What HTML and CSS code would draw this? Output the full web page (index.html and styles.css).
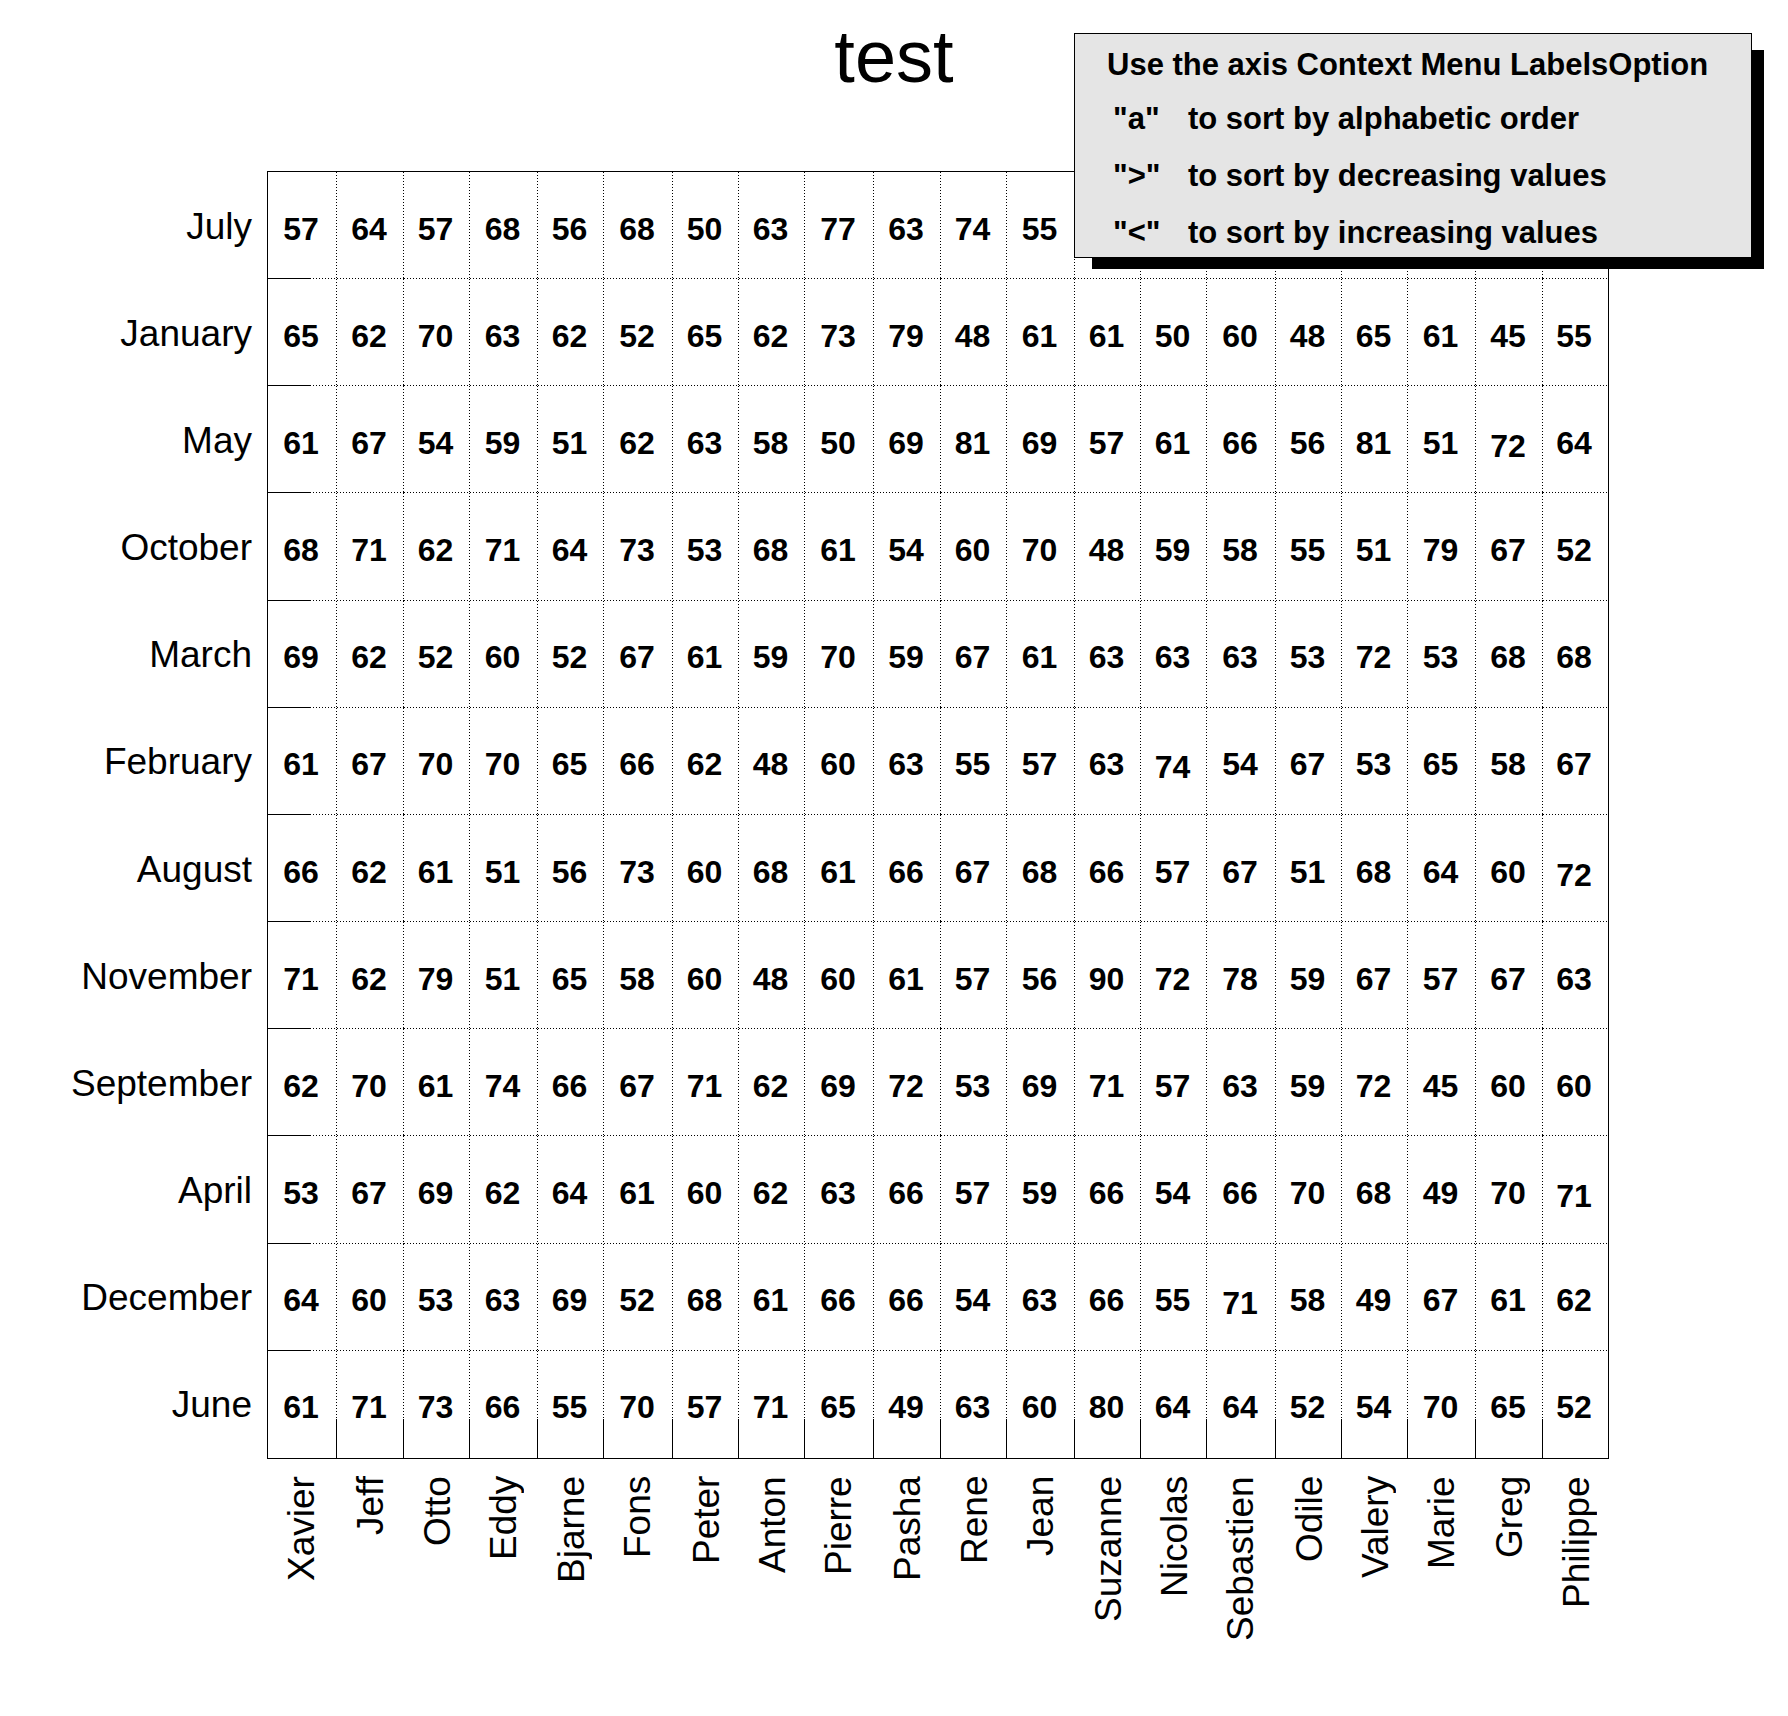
FILE: index.html
```html
<!DOCTYPE html>
<html lang="en">
<head>
<meta charset="utf-8">
<title>test</title>
<link rel="stylesheet" href="styles.css">
</head>
<body>
<h1 class="title">test</h1>

<div class="plot">
  <div class="ylabels">
    <div class="yl">July</div>
    <div class="yl">January</div>
    <div class="yl">May</div>
    <div class="yl">October</div>
    <div class="yl">March</div>
    <div class="yl">February</div>
    <div class="yl">August</div>
    <div class="yl">November</div>
    <div class="yl">September</div>
    <div class="yl">April</div>
    <div class="yl">December</div>
    <div class="yl">June</div>
  </div>

  <div class="frame">
    <div>57</div><div>64</div><div>57</div><div>68</div><div>56</div><div>68</div><div>50</div><div>63</div><div>77</div><div>63</div><div>74</div><div>55</div><div></div><div></div><div></div><div></div><div></div><div></div><div></div><div></div>
    <div>65</div><div>62</div><div>70</div><div>63</div><div>62</div><div>52</div><div>65</div><div>62</div><div>73</div><div>79</div><div>48</div><div>61</div><div>61</div><div>50</div><div>60</div><div>48</div><div>65</div><div>61</div><div>45</div><div>55</div>
    <div>61</div><div>67</div><div>54</div><div>59</div><div>51</div><div>62</div><div>63</div><div>58</div><div>50</div><div>69</div><div>81</div><div>69</div><div>57</div><div>61</div><div>66</div><div>56</div><div>81</div><div>51</div><div class="lo">72</div><div>64</div>
    <div>68</div><div>71</div><div>62</div><div>71</div><div>64</div><div>73</div><div>53</div><div>68</div><div>61</div><div>54</div><div>60</div><div>70</div><div>48</div><div>59</div><div>58</div><div>55</div><div>51</div><div>79</div><div>67</div><div>52</div>
    <div>69</div><div>62</div><div>52</div><div>60</div><div>52</div><div>67</div><div>61</div><div>59</div><div>70</div><div>59</div><div>67</div><div>61</div><div>63</div><div>63</div><div>63</div><div>53</div><div>72</div><div>53</div><div>68</div><div>68</div>
    <div>61</div><div>67</div><div>70</div><div>70</div><div>65</div><div>66</div><div>62</div><div>48</div><div>60</div><div>63</div><div>55</div><div>57</div><div>63</div><div class="lo">74</div><div>54</div><div>67</div><div>53</div><div>65</div><div>58</div><div>67</div>
    <div>66</div><div>62</div><div>61</div><div>51</div><div>56</div><div>73</div><div>60</div><div>68</div><div>61</div><div>66</div><div>67</div><div>68</div><div>66</div><div>57</div><div>67</div><div>51</div><div>68</div><div>64</div><div>60</div><div class="lo">72</div>
    <div>71</div><div>62</div><div>79</div><div>51</div><div>65</div><div>58</div><div>60</div><div>48</div><div>60</div><div>61</div><div>57</div><div>56</div><div>90</div><div>72</div><div>78</div><div>59</div><div>67</div><div>57</div><div>67</div><div>63</div>
    <div>62</div><div>70</div><div>61</div><div>74</div><div>66</div><div>67</div><div>71</div><div>62</div><div>69</div><div>72</div><div>53</div><div>69</div><div>71</div><div>57</div><div>63</div><div>59</div><div>72</div><div>45</div><div>60</div><div>60</div>
    <div>53</div><div>67</div><div>69</div><div>62</div><div>64</div><div>61</div><div>60</div><div>62</div><div>63</div><div>66</div><div>57</div><div>59</div><div>66</div><div>54</div><div>66</div><div>70</div><div>68</div><div>49</div><div>70</div><div class="lo">71</div>
    <div>64</div><div>60</div><div>53</div><div>63</div><div>69</div><div>52</div><div>68</div><div>61</div><div>66</div><div>66</div><div>54</div><div>63</div><div>66</div><div>55</div><div class="lo">71</div><div>58</div><div>49</div><div>67</div><div>61</div><div>62</div>
    <div>61</div><div>71</div><div>73</div><div>66</div><div>55</div><div>70</div><div>57</div><div>71</div><div>65</div><div>49</div><div>63</div><div>60</div><div>80</div><div>64</div><div>64</div><div>52</div><div>54</div><div>70</div><div>65</div><div>52</div>
  </div>

  <div class="xlabels">
    <div class="xl">Xavier</div>
    <div class="xl">Jeff</div>
    <div class="xl">Otto</div>
    <div class="xl">Eddy</div>
    <div class="xl">Bjarne</div>
    <div class="xl">Fons</div>
    <div class="xl">Peter</div>
    <div class="xl">Anton</div>
    <div class="xl">Pierre</div>
    <div class="xl">Pasha</div>
    <div class="xl">Rene</div>
    <div class="xl">Jean</div>
    <div class="xl">Suzanne</div>
    <div class="xl">Nicolas</div>
    <div class="xl">Sebastien</div>
    <div class="xl">Odile</div>
    <div class="xl">Valery</div>
    <div class="xl">Marie</div>
    <div class="xl">Greg</div>
    <div class="xl">Philippe</div>
  </div>
</div>

<div class="legend">
  <div class="lg-head">Use the axis Context Menu LabelsOption</div>
  <div class="lg-row"><span class="lg-key">"a"</span><span>to sort by alphabetic order</span></div>
  <div class="lg-row"><span class="lg-key">"&gt;"</span><span>to sort by decreasing values</span></div>
  <div class="lg-row"><span class="lg-key">"&lt;"</span><span>to sort by increasing values</span></div>
</div>
</body>
</html>
```

FILE: styles.css
```css
* {
  box-sizing: border-box;
}

html,
body {
  margin: 0;
  padding: 0;
  background: #ffffff;
}

body {
  position: relative;
  width: 1788px;
  height: 1716px;
  overflow: hidden;
  font-family: "Liberation Sans", Arial, Helvetica, sans-serif;
  color: #000000;
}

.title {
  margin: 20px 0 0;
  height: 74px;
  font-size: 74px;
  line-height: 74px;
  font-weight: normal;
  text-align: center;
}

.plot {
  --cols: 69px 67px 66px 68px 66px 69px 66px 66px 69px 67px 66px 68px 66px 66px 69px 66px 66px 68px 67px 65px;
  display: grid;
  grid-template-columns: 267px 1342px;
  grid-template-rows: 1288px 257px;
  margin-top: 77px;
}

/* month labels */
.ylabels {
  display: grid;
  grid-template-rows: repeat(12, 1fr);
  padding: 1px 15px 1px 0;
}

.yl {
  display: flex;
  align-items: center;
  justify-content: flex-end;
  padding-top: 1px;
  font-size: 37px;
  line-height: 37px;
  white-space: nowrap;
}

/* table frame */
.frame {
  --v: repeating-linear-gradient(to bottom, #000 0 1px, transparent 1px 3px) right top / 1px 100% no-repeat;
  --h: repeating-linear-gradient(to right, #000 0 1px, transparent 1px 3px) left bottom / 100% 1px no-repeat;
  --tv: linear-gradient(#000, #000) right bottom / 1px 39px no-repeat;
  --th: linear-gradient(#000, #000) left bottom / 42px 1px no-repeat;
  display: grid;
  grid-template-columns: var(--cols);
  grid-template-rows: repeat(12, 1fr);
  border: 1px solid #000000;
  background: #ffffff;
}

.frame > div {
  display: flex;
  align-items: center;
  justify-content: center;
  padding: 6px 3px 0 0;
  font-size: 32px;
  line-height: 32px;
  font-weight: bold;
  background: var(--v), var(--h);
}

.frame > div:nth-child(20n+1) {
  background: var(--th), var(--v), var(--h);
}

.frame > div:nth-child(20n) {
  background: var(--h);
}

.frame > div:nth-child(n+221) {
  background: var(--tv), var(--v);
}

.frame > div:nth-child(240) {
  background: none;
}

.frame > div.lo {
  padding-top: 12px;
}

/* name labels */
.xlabels {
  grid-column: 2;
  grid-row: 2;
  display: grid;
  grid-template-columns: var(--cols);
  align-items: start;
  padding: 17px 1px 0;
}

.xl {
  height: 230px;
  writing-mode: vertical-rl;
  transform: rotate(180deg);
  text-align: end;
  padding-right: 15px;
  font-size: 37px;
  line-height: 37px;
  white-space: nowrap;
}

/* context menu hint */
.legend {
  position: absolute;
  left: 1074px;
  top: 33px;
  width: 678px;
  height: 225px;
  padding: 6px 0 0 32px;
  border: 1px solid #000000;
  background: #e5e5e5;
  box-shadow: 15px 14px 0 -3px #000000;
  font-size: 31px;
  font-weight: bold;
  white-space: nowrap;
}

.lg-head {
  line-height: 50px;
}

.lg-row {
  display: flex;
  padding-left: 6px;
  line-height: 57px;
}

.lg-key {
  width: 75px;
}
```
